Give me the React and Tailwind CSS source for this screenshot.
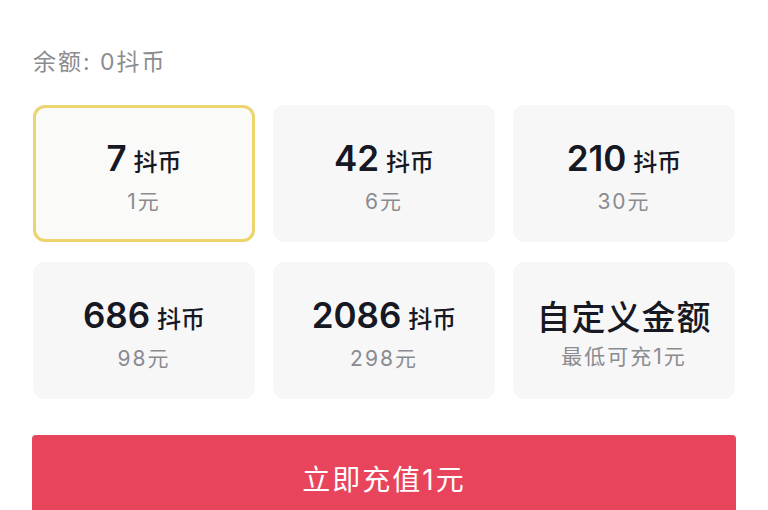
const packages = [
  { coins: '7', price: '1元', selected: true },
  { coins: '42', price: '6元' },
  { coins: '210', price: '30元' },
  { coins: '686', price: '98元' },
  { coins: '2086', price: '298元' },
]

const font = { fontFamily: 'Inter, "Noto Sans CJK SC", sans-serif' }

export default function App() {
  return (
    <div className="min-h-[510px] w-[768px] overflow-hidden bg-white" style={font}>
      <div className="px-[33px] pt-[47px]">
        {/* Balance */}
        <div className="text-[23px] leading-[30px] tracking-[2px] text-[#8c8c8f]">余额: 0抖币</div>

        {/* Packages */}
        <div className="mt-[28px] grid grid-cols-3 gap-x-[18px] gap-y-[20px]">
          {packages.map((p) => (
            <div
              key={p.coins}
              className={`flex h-[137px] flex-col items-center justify-center rounded-[12px] pt-[6px] ${
                p.selected ? 'border-[3px] border-[#ecd46e] bg-[#fafaf8]' : 'bg-[#f7f7f8]'
              }`}
            >
              <div className="flex items-baseline text-[#161823]">
                <span className="text-[35px] font-semibold leading-[40px]">{p.coins}</span>
                <span className="ml-[7px] text-[24px] font-medium leading-[40px]">抖币</span>
              </div>
              <div className="mt-[6px] text-[21px] leading-[26px] tracking-[2px] text-[#8a8b91]">{p.price}</div>
            </div>
          ))}
          <div className="flex h-[137px] flex-col items-center justify-center rounded-[12px] bg-[#f7f7f8] pt-[6px]">
            <div className="text-[34px] font-medium leading-[40px] tracking-[1px] text-[#161823]">自定义金额</div>
            <div className="mt-[6px] text-[21px] leading-[26px] tracking-[2px] text-[#8a8b91]">最低可充1元</div>
          </div>
        </div>
      </div>

      {/* Recharge button */}
      <div className="mt-[36px] px-[32px]">
        <button className="flex h-[90px] w-full items-center justify-center rounded-[4px] bg-[#e8455c] text-[28px] tracking-[2px] text-white">
          立即充值1元
        </button>
      </div>
    </div>
  )
}
